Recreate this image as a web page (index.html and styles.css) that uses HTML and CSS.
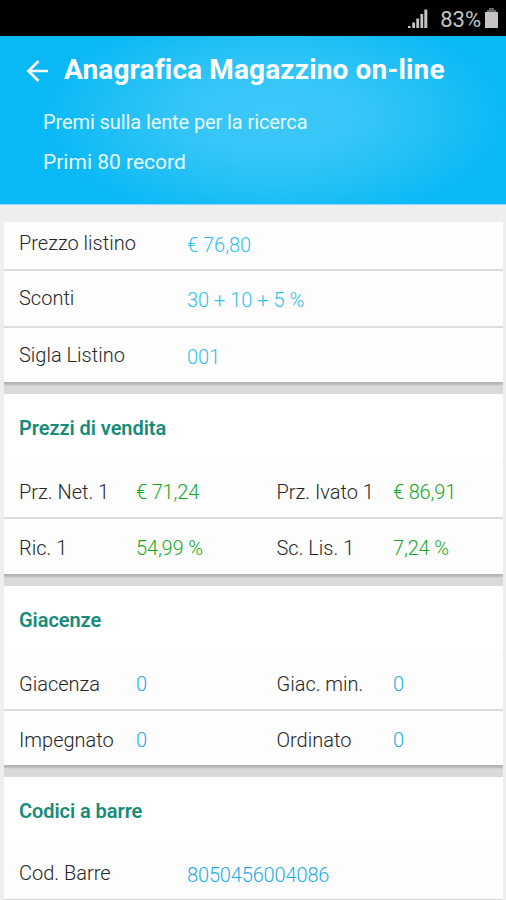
FILE: index.html
```html
<!DOCTYPE html>
<html lang="it">
<head>
<meta charset="utf-8">
<title>Anagrafica Magazzino on-line</title>
<link rel="stylesheet" href="styles.css">
</head>
<body>
<div class="status">
  <svg class="signal" width="20" height="20" viewBox="0 0 20 20"><path d="M0 20v-2h2.500v2zM4.200 20v-5.500h2.800v5.500zM8.300 20v-9.500h2.800v9.500zM12.400 20V6h2.800v14zM16.300 20V1.500h3V20z"/></svg>
  <span class="percent">83%</span>
  <svg class="battery" width="13" height="20" viewBox="0 0 13 20"><path class="cap" d="M4 0h5v2h2v2H2V2h2z"/><path d="M0 4h13v16H0z"/></svg>
</div>
<header class="header">
  <div class="bar">
    <svg class="back" width="23" height="24" viewBox="0 0 23 24"><path d="M12.500 2 2.500 12l10 10M2.500 12H22"/></svg>
    <h1 class="title">Anagrafica Magazzino on-line</h1>
  </div>
  <p class="hint">Premi sulla lente per la ricerca</p>
  <p class="count">Primi 80 record</p>
</header>
<main class="content">
  <section class="card">
    <div class="row single first"><span class="label">Prezzo listino</span><span class="value cyan">€ 76,80</span></div>
    <div class="row single"><span class="label">Sconti</span><span class="value cyan">30 + 10 + 5 %</span></div>
    <div class="row single"><span class="label">Sigla Listino</span><span class="value cyan">001</span></div>
  </section>
  <section class="card">
    <h2 class="heading">Prezzi di vendita</h2>
    <div class="row double"><span class="label">Prz. Net. 1</span><span class="value green">€ 71,24</span><span class="label">Prz. Ivato 1</span><span class="value green">€ 86,91</span></div>
    <div class="row double"><span class="label">Ric. 1</span><span class="value green">54,99 %</span><span class="label">Sc. Lis. 1</span><span class="value green">7,24 %</span></div>
  </section>
  <section class="card">
    <h2 class="heading">Giacenze</h2>
    <div class="row double"><span class="label">Giacenza</span><span class="value blue">0</span><span class="label">Giac. min.</span><span class="value blue">0</span></div>
    <div class="row double"><span class="label">Impegnato</span><span class="value blue">0</span><span class="label">Ordinato</span><span class="value blue">0</span></div>
  </section>
  <section class="card">
    <h2 class="heading">Codici a barre</h2>
    <div class="row single"><span class="label">Cod. Barre</span><span class="value blue">8050456004086</span></div>
  </section>
</main>
</body>
</html>
```
FILE: styles.css
```css
* { box-sizing: border-box; }
html, body { margin: 0; height: 900px; overflow: hidden; }
body {
  display: flex;
  flex-direction: column;
  background: #eeeeee;
  font-family: Roboto, "Liberation Sans", sans-serif;
}
h1, h2, p { margin: 0; }

.status {
  flex: none;
  display: flex;
  align-items: flex-start;
  justify-content: flex-end;
  height: 36px;
  padding: 8px 8px 0 0;
  background: #000;
  color: #c4c4c4;
}
.status svg { fill: #c4c4c4; }
.status .cap { fill: #686868; }
.signal { margin-right: 12px; }
.percent { font-size: 22px; line-height: 24px; margin-right: 4px; }

.header {
  flex: none;
  height: 169px;
  border-bottom: 1px solid #8adcf8;
  background: radial-gradient(ellipse 235px 112px at 275px 80px, #3dc8f8 0%, #34c5f7 40%, #1cbef6 75%, #08b9f6 100%);
  color: #fff;
}
.bar { display: flex; align-items: center; height: 66px; padding-left: 26px; }
.back { fill: none; stroke: #fff; stroke-width: 2.700; margin-top: 3px; }
.title {
  margin: 1px 0 0 15px;
  font-size: 28px;
  line-height: 34px;
  font-weight: 700;
  letter-spacing: 0.140px;
  white-space: nowrap;
}
.hint, .count { padding-left: 43px; line-height: 40px; color: #e8f9ff; }
.hint { font-size: 20px; letter-spacing: -0.100px; }
.count { font-size: 21px; }

.content {
  flex: none;
  display: flex;
  flex-direction: column;
  padding: 17px 3px 0 4px;
}
.card { background: #fdfdfd; }
.card:not(:last-child)::after {
  content: "";
  display: block;
  height: 12px;
  background: linear-gradient(#b4b4b4 0, #b8b8b8 2px, #dadada 4px, #dadada 12px);
}
.heading {
  height: 66px;
  padding-left: 15px;
  background: #fff;
  color: #158c78;
  font-size: 20px;
  line-height: 69px;
  font-weight: 600;
  letter-spacing: -0.060px;
}
.row {
  display: grid;
  align-items: center;
  height: 56.500px;
  padding-left: 15px;
  font-size: 20px;
  line-height: 24px;
  white-space: nowrap;
}
.row + .row { border-top: 2px solid #dcdcdc; }
.single { grid-template-columns: 168px 1fr; }
.double { grid-template-columns: 117px 140.500px 116.500px 1fr; padding-top: 4px; }
.heading + .double { height: 57px; padding-top: 7px; }
.single .value { margin-top: 4px; }
.first { height: 47px; padding-bottom: 6px; }
.heading + .single { height: 57px; padding-top: 4px; border-bottom: 1px solid #d4d4d4; }
.label { color: #262626; font-weight: 300; }
.value { font-weight: 300; }
.cyan { color: #2fc0ec; }
.blue { color: #1cabea; letter-spacing: -0.150px; }
.green { color: #12a923; letter-spacing: -0.150px; }
```
